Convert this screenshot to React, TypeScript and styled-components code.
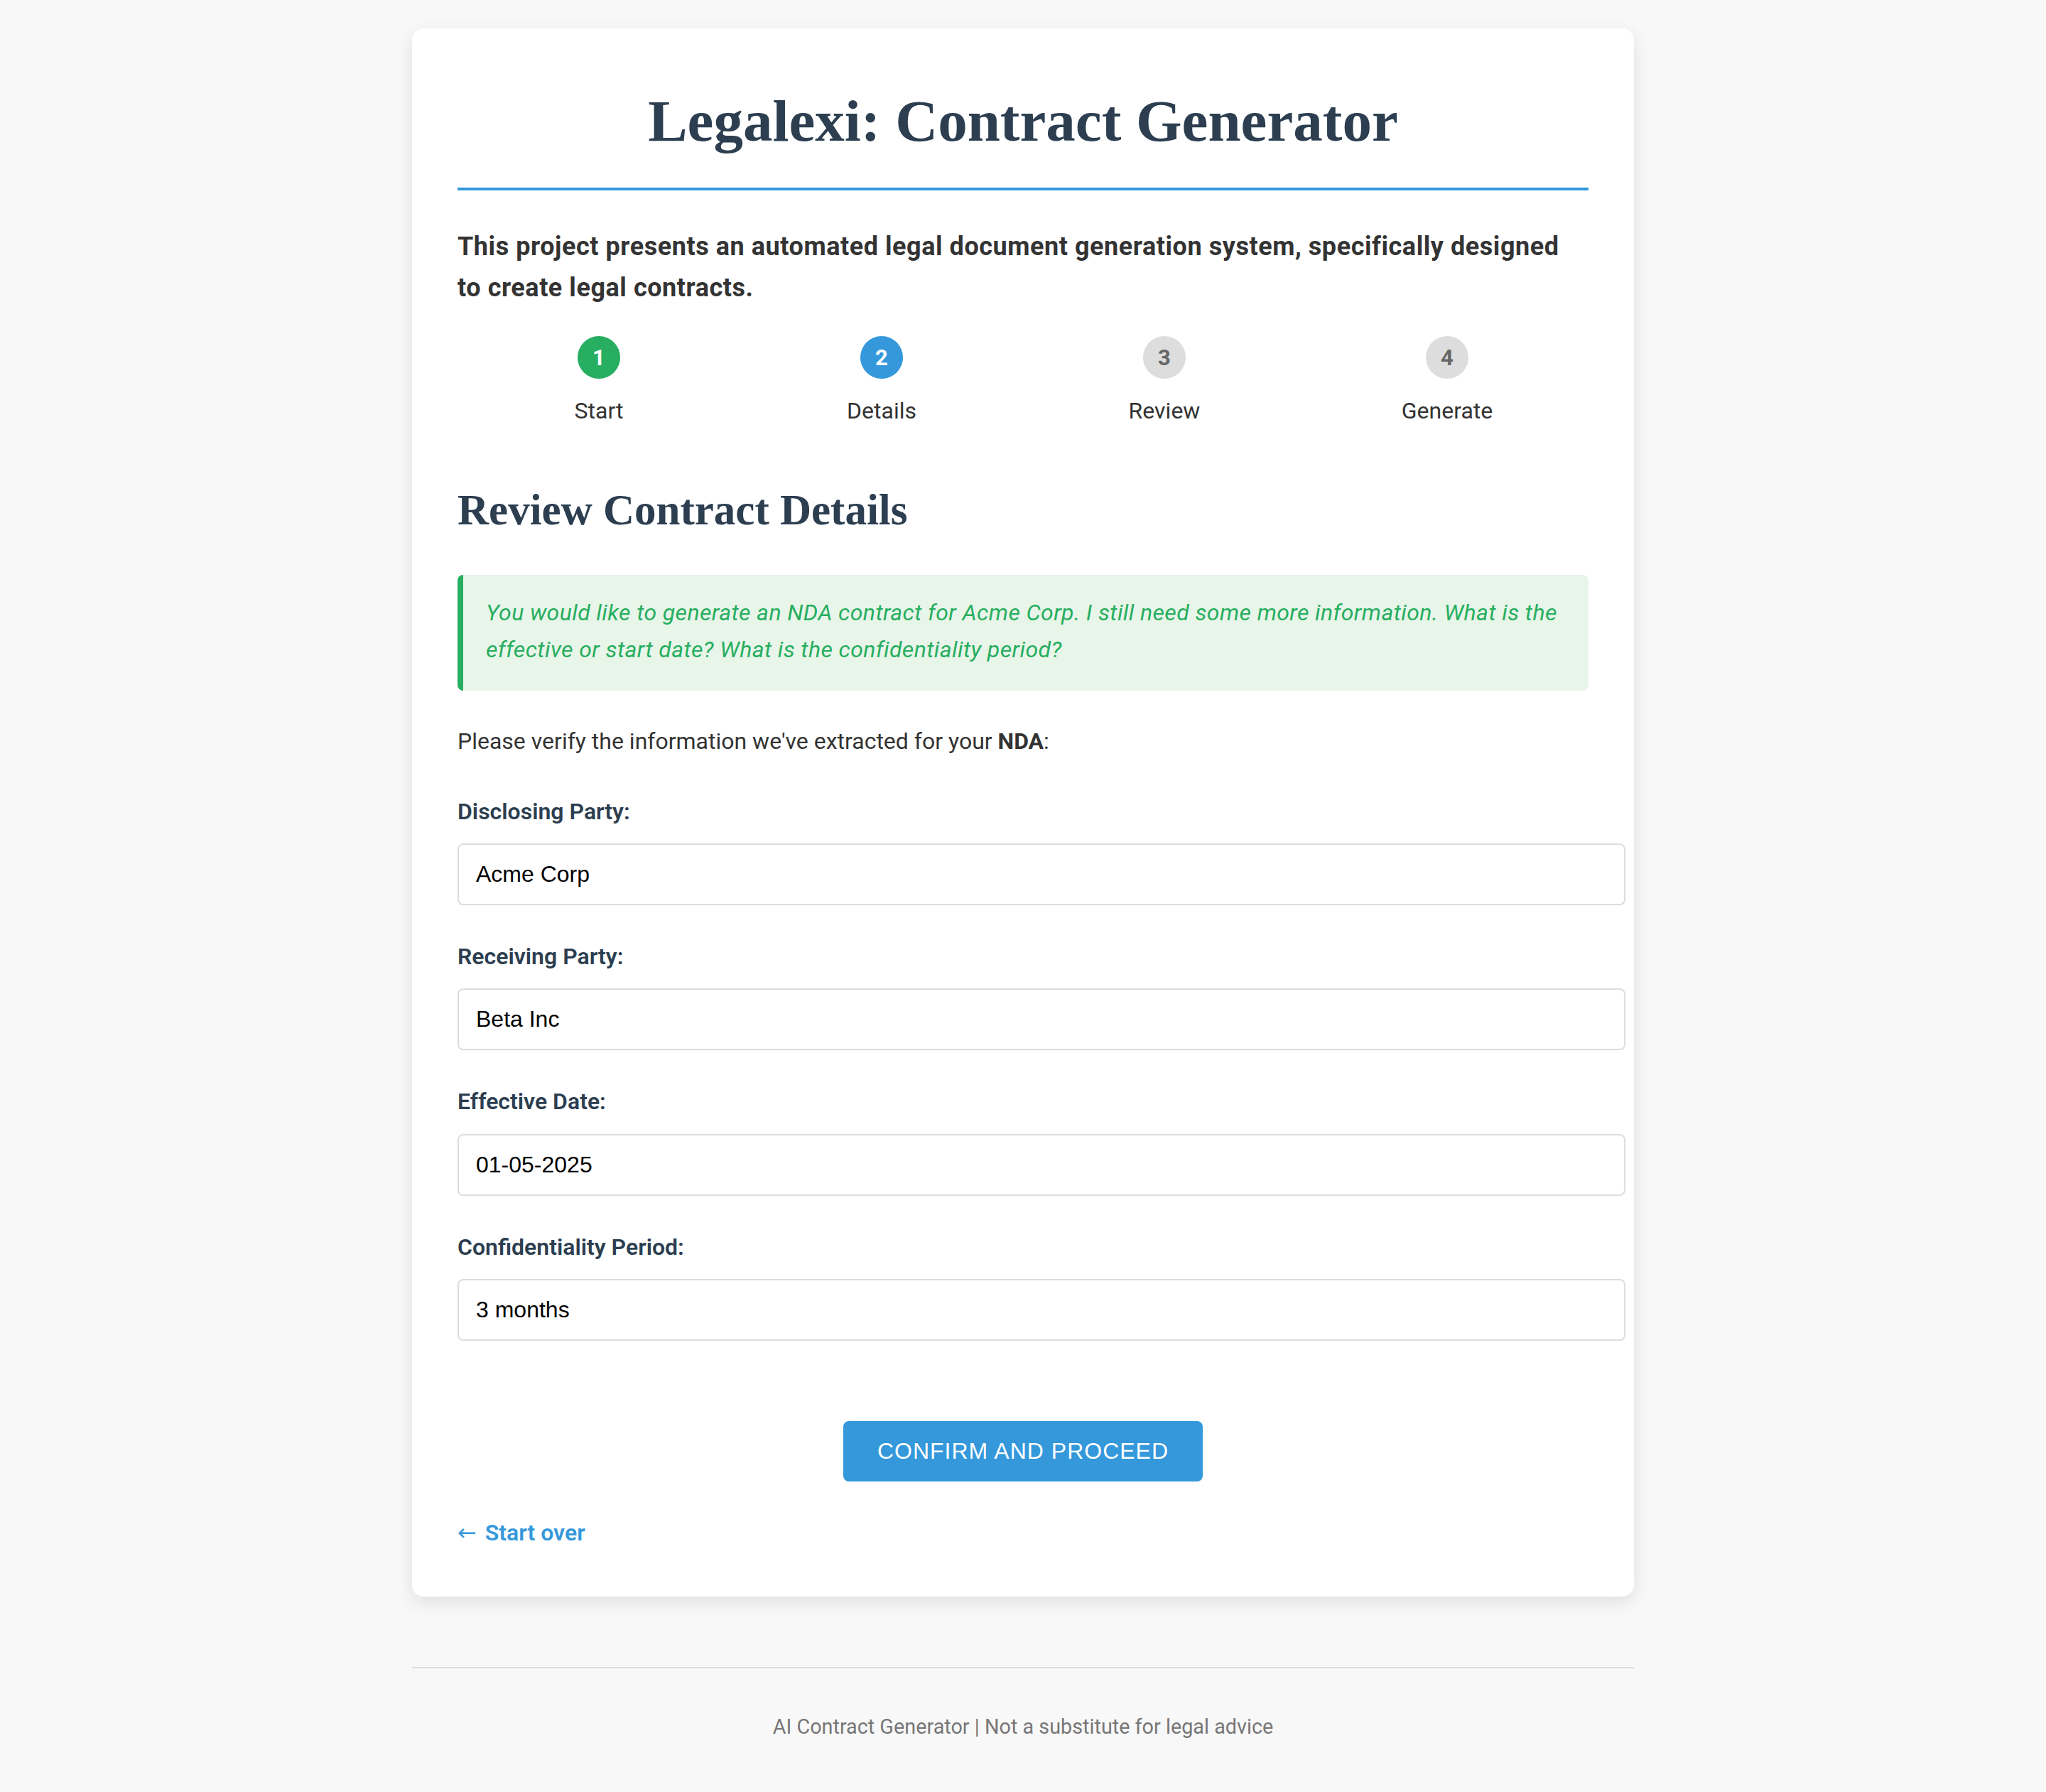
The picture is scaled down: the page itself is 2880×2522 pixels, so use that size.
import React from "react";
import styled, { createGlobalStyle } from "styled-components";

const GlobalStyle = createGlobalStyle`
  html, body {
    margin: 0;
    padding: 0;
    background: #f8f8f8;
  }
  body {
    font-family: Roboto, "Noto Sans", "Liberation Sans", sans-serif;
    font-size: 32px;
    line-height: 1.6;
    color: #333;
  }
`;

const Page = styled.div`
  display: flex;
  flex-direction: column;
  align-items: center;
  padding-top: 40px;
`;

const Card = styled.main`
  width: 1720px;
  box-sizing: border-box;
  padding: 0 64px 64px;
  background: #fff;
  border-radius: 16px;
  box-shadow: 0 8px 24px rgba(0, 0, 0, 0.1);
  display: flex;
  flex-direction: column;
`;

const Title = styled.h1`
  margin: 82px 0 0;
  padding-bottom: 46px;
  border-bottom: 4px solid #3498db;
  text-align: center;
  font-family: "Liberation Serif", "DejaVu Serif", serif;
  font-weight: 700;
  font-size: 83px;
  line-height: 96px;
  color: #2c3e50;
`;

const Intro = styled.p`
  margin: 51px 0 0;
  font-size: 36px;
  font-weight: 700;
  line-height: 57.6px;
  letter-spacing: 0.55px;
  color: #333;
`;

const Steps = styled.div`
  display: grid;
  grid-template-columns: repeat(4, 1fr);
  margin-top: 39px;
`;

const Step = styled.div`
  display: flex;
  flex-direction: column;
  align-items: center;
`;

const StepCircle = styled.div<{ $bg: string; $fg: string }>`
  width: 60px;
  height: 60px;
  border-radius: 50%;
  background: ${(p) => p.$bg};
  color: ${(p) => p.$fg};
  display: flex;
  align-items: center;
  justify-content: center;
  font-size: 31px;
  font-weight: 700;
  line-height: 1;
`;

const StepLabel = styled.div`
  margin-top: 20px;
  font-size: 32px;
  line-height: 51.2px;
  color: #333;
`;

const SectionTitle = styled.h2`
  margin: 78px 0 0;
  font-family: "Liberation Serif", "DejaVu Serif", serif;
  font-weight: 700;
  font-size: 61px;
  line-height: 72px;
  color: #2c3e50;
`;

const Alert = styled.div`
  margin-top: 55px;
  padding: 28px 32px 32px 32px;
  background: #e8f5e9;
  border-left: 8px solid #27ae60;
  border-radius: 8px;
  color: #27ae60;
  font-style: italic;
  font-size: 32px;
  line-height: 51.2px;
  letter-spacing: 0.4px;
`;

const Lead = styled.p`
  margin: 46px 0 0;
  font-size: 32px;
  line-height: 51.2px;
  color: #333;
`;

const Form = styled.div`
  display: flex;
  flex-direction: column;
  gap: 47px;
  margin-top: 48px;
`;

const Field = styled.div`
  display: flex;
  flex-direction: column;
`;

const Label = styled.label`
  font-size: 32px;
  line-height: 51.2px;
  font-weight: 600;
  color: #2c3e50;
  margin-bottom: 19px;
`;

const Input = styled.input`
  box-sizing: content-box;
  width: 100%;
  padding: 24px;
  border: 2px solid #ddd;
  border-radius: 8px;
  font-family: "Liberation Sans", Arial, sans-serif;
  font-size: 32px;
  line-height: 35px;
  height: 35px;
  color: #000;
  background: #fff;
  outline: none;
`;

const Actions = styled.div`
  display: flex;
  justify-content: center;
  margin-top: 113px;
`;

const PrimaryButton = styled.button`
  padding: 24px 48px;
  border: none;
  border-radius: 8px;
  background: #3498db;
  color: #fff;
  font-family: "Liberation Sans", Arial, sans-serif;
  font-size: 32px;
  line-height: 37px;
  letter-spacing: 1px;
  text-transform: uppercase;
  cursor: pointer;
`;

const BackLink = styled.a`
  margin-top: 47px;
  align-self: flex-start;
  font-size: 32px;
  line-height: 51.2px;
  font-weight: 600;
  color: #3498db;
  text-decoration: none;
`;

const Arrow = styled.span`
  font-family: "DejaVu Sans", "Liberation Sans", sans-serif;
  font-weight: 400;
  font-size: 32px;
  margin-right: 4px;
`;

const Footer = styled.footer`
  width: 1720px;
  margin-top: 99px;
  border-top: 2px solid #ddd;
  padding: 60px 0 72px;
  text-align: center;
  font-size: 28.8px;
  line-height: 44.8px;
  color: #777;
`;

const steps = [
  { n: 1, label: "Start", bg: "#27ae60", fg: "#fff" },
  { n: 2, label: "Details", bg: "#3498db", fg: "#fff" },
  { n: 3, label: "Review", bg: "#ddd", fg: "#666" },
  { n: 4, label: "Generate", bg: "#ddd", fg: "#666" },
];

const fields = [
  { id: "disclosing", label: "Disclosing Party:", value: "Acme Corp" },
  { id: "receiving", label: "Receiving Party:", value: "Beta Inc" },
  { id: "effective", label: "Effective Date:", value: "01-05-2025" },
  { id: "period", label: "Confidentiality Period:", value: "3 months" },
];

export default function App() {
  return (
    <>
      <GlobalStyle />
      <Page>
        <Card>
          <Title>Legalexi: Contract Generator</Title>
          <Intro>
            This project presents an automated legal document generation system, specifically
            designed to create legal contracts.
          </Intro>
          <Steps>
            {steps.map((s) => (
              <Step key={s.n}>
                <StepCircle $bg={s.bg} $fg={s.fg}>
                  {s.n}
                </StepCircle>
                <StepLabel>{s.label}</StepLabel>
              </Step>
            ))}
          </Steps>
          <SectionTitle>Review Contract Details</SectionTitle>
          <Alert>
            You would like to generate an NDA contract for Acme Corp. I still need some more
            information. What is the effective or start date? What is the confidentiality period?
          </Alert>
          <Lead>
            Please verify the information we've extracted for your <strong>NDA</strong>:
          </Lead>
          <Form>
            {fields.map((f) => (
              <Field key={f.id}>
                <Label htmlFor={f.id}>{f.label}</Label>
                <Input id={f.id} type="text" defaultValue={f.value} />
              </Field>
            ))}
          </Form>
          <Actions>
            <PrimaryButton type="button">Confirm and Proceed</PrimaryButton>
          </Actions>
          <BackLink href="#">
            <Arrow>←</Arrow> Start over
          </BackLink>
        </Card>
        <Footer>AI Contract Generator | Not a substitute for legal advice</Footer>
      </Page>
    </>
  );
}
